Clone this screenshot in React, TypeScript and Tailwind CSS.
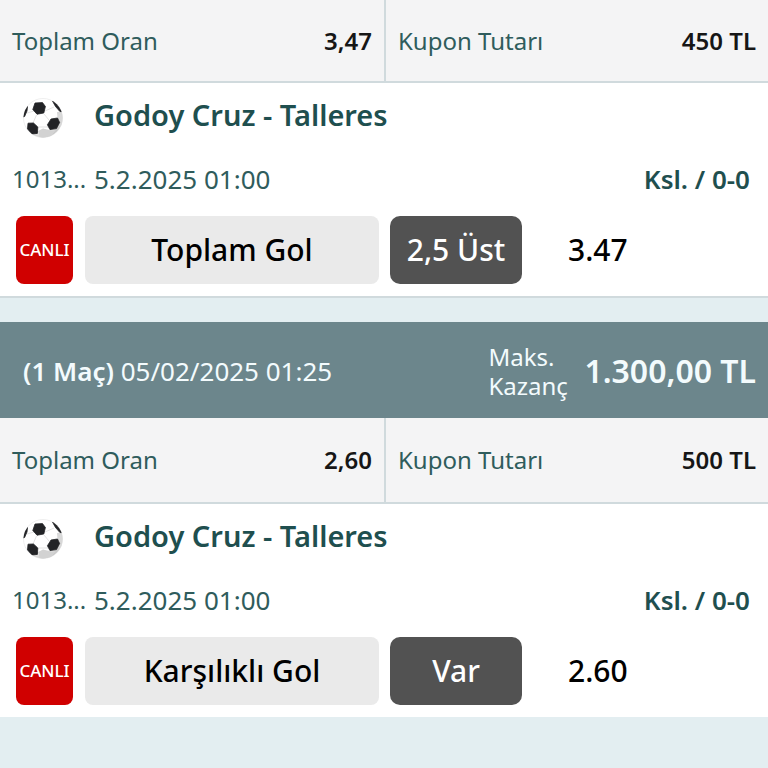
import React from "react";
import clsx from "clsx";

interface Coupon {
  id: number;
  date?: string;
  maxWin?: string;
  totalOdds: string;
  stake: string;
  code: string;
  match: string;
  matchDate: string;
  score: string;
  market: string;
  pick: string;
  odds: string;
}

const coupons: Coupon[] = [
  {
    id: 1,
    totalOdds: "3,47",
    stake: "450 TL",
    code: "1013...",
    match: "Godoy Cruz - Talleres",
    matchDate: "5.2.2025 01:00",
    score: "Ksl. / 0-0",
    market: "Toplam Gol",
    pick: "2,5 Üst",
    odds: "3.47",
  },
  {
    id: 2,
    date: "05/02/2025 01:25",
    maxWin: "1.300,00 TL",
    totalOdds: "2,60",
    stake: "500 TL",
    code: "1013...",
    match: "Godoy Cruz - Talleres",
    matchDate: "5.2.2025 01:00",
    score: "Ksl. / 0-0",
    market: "Karşılıklı Gol",
    pick: "Var",
    odds: "2.60",
  },
];

const BallIcon = () => (
  <svg viewBox="0 0 40 40" className="size-10 shrink-0" aria-hidden="true">
    <defs>
      <radialGradient id="ball" cx="0.4" cy="0.35" r="0.68">
        <stop offset="0.7" stopColor="#ffffff" />
        <stop offset="1" stopColor="#c0c0c0" />
      </radialGradient>
      <clipPath id="ballEdge">
        <circle cx="20" cy="20" r="19.5" />
      </clipPath>
    </defs>
    <circle cx="20" cy="20" r="19.5" fill="url(#ball)" stroke="#dedede" strokeWidth="0.5" />
    <g clipPath="url(#ballEdge)">
      <path d="M15 33 L20 30.5 L26 32 L32 33 L27 40 L17 40 Z" fill="#d2d2d2" />
      <path d="M34 14 L40 14 L40 30 L35 27 Z" fill="#d8d8d8" />
      <path
        d="M11 13 L4 15 M22 13 L31 9 M13.5 17 L10 25 M21 16 L26 22 M15 29 L25 29 M36 22 L38 14"
        stroke="#dcdcdc"
        strokeWidth="0.8"
        fill="none"
      />
      <g fill="#222326" stroke="#222326" strokeWidth="0.8" strokeLinejoin="round">
        <path d="M12 5 L19.5 4.6 L22.4 8.5 L20.8 15 L14 16.2 L9.8 11.5 Z" />
        <path d="M28 21 L34.5 20 L36.6 24.5 L33.5 30.6 L27 31.6 L24.4 26.8 Z" />
        <path d="M5 25.2 L10.5 25 L14.8 29 L14.4 35.4 L9 36 L4.5 31 Z" />
        <path d="M29.5 3 L34 4.5 L39.5 13.5 L37 13.6 L32.5 8.5 Z" />
        <path d="M0 19 L2 12 L4.5 8.5 L4 13 L1.6 18.5 Z" />
      </g>
    </g>
  </svg>
);

const CouponHeader = ({ date, maxWin }: { date: string; maxWin?: string }) => (
  <header className="flex h-24 items-center justify-between bg-[#6c868c] pl-[23px] pr-3 pt-0.5 text-[#f3fbfd]">
    <p className="text-[26px] leading-8">
      <b className="font-semibold">(1 Maç)</b> {date}
    </p>
    <div className="flex items-center gap-4">
      <p className="w-20 text-2xl leading-[29px]">Maks. Kazanç</p>
      <b className="text-[32px] font-semibold leading-10">{maxWin}</b>
    </div>
  </header>
);

const Stat = ({ label, value }: { label: string; value: string }) => (
  <div className="flex items-center justify-between border-[#d0dadd] px-3 text-2xl leading-8 last:border-l-2">
    <dt className="text-[#2f5c5c]">{label}</dt>
    <dd className="font-semibold text-[#161616]">{value}</dd>
  </div>
);

const CouponCard = ({ coupon }: { coupon: Coupon }) => (
  <article className="group">
    {coupon.date && <CouponHeader date={coupon.date} maxWin={coupon.maxWin} />}
    <dl
      className={clsx(
        "grid grid-cols-2 border-b-2 border-[#d0dadd] bg-[#f4f4f5]",
        coupon.date ? "h-[86px]" : "h-[83px]"
      )}
    >
      <Stat label="Toplam Oran" value={coupon.totalOdds} />
      <Stat label="Kupon Tutarı" value={coupon.stake} />
    </dl>
    <section className="border-b-2 border-[#d0dadd] bg-white pb-3 group-last:border-[#e3eef1]">
      <div className="flex h-16 gap-[31px] pl-[23px]">
        <div className="pt-[15px]">
          <BallIcon />
        </div>
        <h2 className="pt-3 text-[29px] font-semibold leading-10 text-[#1f4f4f]">{coupon.match}</h2>
      </div>
      <div className="flex h-[69px] items-center pb-1.5 pl-3 pr-[18px] text-[26px] leading-8 text-[#2f5c5c]">
        <span className="w-[82px] text-2xl leading-8">{coupon.code}</span>
        <time className="flex-1">{coupon.matchDate}</time>
        <b className="font-semibold text-[#1f4f4f]">{coupon.score}</b>
      </div>
      <div className="flex h-[68px] items-stretch pl-4 text-3xl font-medium leading-10">
        <span className="flex w-[57px] items-center justify-center rounded-lg bg-[#d00000] text-[17px] text-white">
          CANLI
        </span>
        <span className="ml-3 flex flex-1 items-center justify-center rounded-lg bg-[#eaeaea] text-black">
          {coupon.market}
        </span>
        <span className="ml-[11px] flex w-[132px] items-center justify-center rounded-[10px] bg-[#525252] text-white">
          {coupon.pick}
        </span>
        <span className="flex w-[246px] items-center pl-[46px] text-black">{coupon.odds}</span>
      </div>
    </section>
  </article>
);

const App: React.FC = () => {
  return (
    <main className="flex min-h-screen flex-col gap-6 bg-[#e3eef1] font-['Noto_Sans',sans-serif]">
      {coupons.map((coupon) => (
        <CouponCard key={coupon.id} coupon={coupon} />
      ))}
    </main>
  );
};

export default App;
